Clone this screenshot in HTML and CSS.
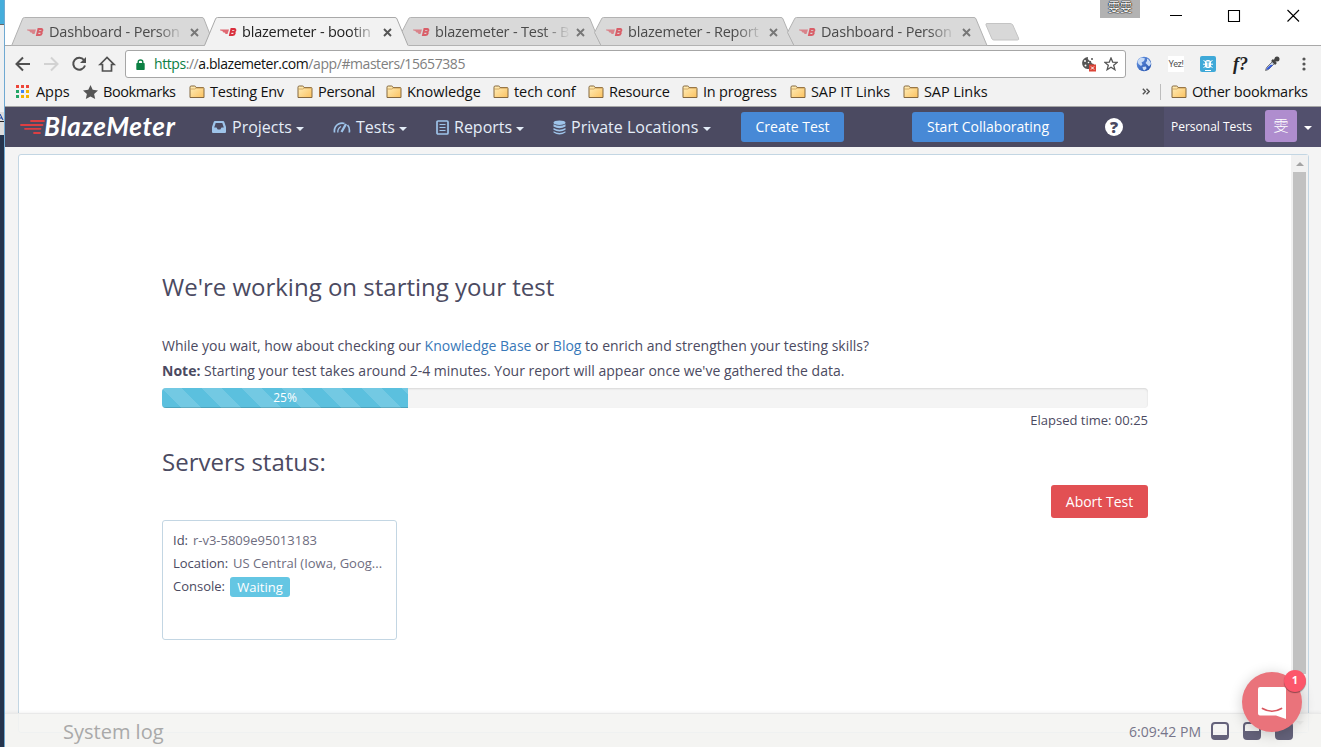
FILE: index.html
```html
<!DOCTYPE html>
<html lang="en">
<head>
<meta charset="utf-8">
<title>blazemeter - booting</title>
<link rel="stylesheet" href="styles.css">
</head>
<body>
<svg width="0" height="0" class="defs">
  <defs>
    <linearGradient id="fold" x1="0" y1="0" x2="1" y2="1"><stop offset="0" stop-color="#fff0bd"/><stop offset="1" stop-color="#fbc15f"/></linearGradient>
    <linearGradient id="glass" x1="0" y1="0" x2="1" y2="1"><stop offset="0" stop-color="#6b9ae8"/><stop offset="1" stop-color="#1e4ca8"/></linearGradient>
    <symbol id="folder" viewBox="0 0 16 14"><path d="M1 12.500V2.200Q1 1 2.200 1H5.600Q6.400 1 6.700 1.800L7 2.500H14Q15 2.500 15 3.500V12.500Z" fill="url(#fold)" stroke="#85683f"/><path d="M1.600 4H5.800L7.400 3.100H14.400" fill="none" stroke="#c79a55" stroke-width=".8"/></symbol>
    <symbol id="fav" viewBox="0 0 17 10"><path d="M0 2.500H9L7.500 7H5.500L5 5.800L3 5.200L2.500 4L.3 3.500Z" fill="#d92f3d" opacity=".7"/><path d="M10 8L11.400 2H14.200Q15.800 2.200 15.300 3.600Q14.900 4.800 13.600 4.800H11.500H13.400Q15.100 5 14.700 6.400Q14.200 8 12.500 8Z" fill="none" stroke="#d92f3d" stroke-width="1.900"/></symbol>
    <symbol id="close" viewBox="0 0 9 9"><path d="M1 1L8 8M8 1L1 8" fill="none" stroke="currentColor" stroke-width="1.900"/></symbol>
  </defs>
</svg>
<div class="screen">
  <aside class="behind"><div class="behind-sky"></div><div class="behind-pale"></div><div class="behind-grey"><svg viewBox="0 0 4 12"><path d="M0 2L3 8M0 6H2" stroke="#0c3b9c" fill="none"/><path d="M0 9.500H4" stroke="#222"/></svg></div><div class="behind-navy"></div></aside>
  <div class="window">
    <div class="tabs">
      <div class="tab"><svg class="tab-bg" viewBox="0 0 201 29"><path d="M.5 29L11.500 2Q12 .5 13.500 .5H191Q192.500 .5 193 2L200 20L196.500 28.500H.5Z"/></svg><svg class="fav"><use href="#fav"/></svg><span class="tab-title">Dashboard - Person</span><svg class="tab-x"><use href="#close"/></svg></div>
      <div class="tab active"><svg class="tab-bg" viewBox="0 0 206 29"><path class="fill" d="M0 30L11.500 2Q12 .5 13.500 .5H191Q192.500 .5 193 2L205 30Z"/><path class="line" d="M.5 28.500L11.500 2Q12 .5 13.500 .5H191Q192.500 .5 193 2L204 28.500"/></svg><svg class="fav"><use href="#fav"/></svg><span class="tab-title">blazemeter - bootin</span><svg class="tab-x"><use href="#close"/></svg></div>
      <div class="tab"><svg class="tab-bg" viewBox="0 0 206 29"><path d="M11 28.500L4.500 15.500L11.500 2Q12 .5 13.500 .5H191Q192.500 .5 193 2L204 28.500Z"/></svg><svg class="fav"><use href="#fav"/></svg><span class="tab-title">blazemeter - Test - B</span><svg class="tab-x"><use href="#close"/></svg></div>
      <div class="tab"><svg class="tab-bg" viewBox="0 0 206 29"><path d="M11 28.500L4.500 15.500L11.500 2Q12 .5 13.500 .5H191Q192.500 .5 193 2L204 28.500Z"/></svg><svg class="fav"><use href="#fav"/></svg><span class="tab-title">blazemeter - Report</span><svg class="tab-x"><use href="#close"/></svg></div>
      <div class="tab"><svg class="tab-bg" viewBox="0 0 206 29"><path d="M11 28.500L4.500 15.500L11.500 2Q12 .5 13.500 .5H191Q192.500 .5 193 2L204 28.500Z"/></svg><svg class="fav"><use href="#fav"/></svg><span class="tab-title">Dashboard - Person</span><svg class="tab-x"><use href="#close"/></svg></div>
      <svg class="newtab" viewBox="0 0 35 18"><path d="M2 .5H25Q27 .5 27.800 2L33.500 15Q34.300 17 32.500 17H9Q7.500 17 7 16L1 2Q.5 .5 2 .5Z" fill="#d8d8d8" stroke="#c4c4c4"/></svg>
      <div class="profile">雯雯</div>
      <svg class="win-btns" viewBox="0 0 131 14"><path d="M0 7.500H12M58.500 2.500H69.500V13.500H58.500ZM117.500 2L129 13.500M129 2L117.500 13.500" fill="none" stroke="#000" stroke-width="1.100"/></svg>
    </div>
    <div class="toolbar">
      <svg class="nav-icons" viewBox="0 0 104 18"><g fill="none" stroke="#505050" stroke-width="2"><path d="M15 9H2M8 2.500L1.500 9L8 15.500"/><path d="M29 9H42M36 2.500L42.500 9L36 15.500" stroke="#d2d2d2"/><path d="M69 5A6 6 0 1 0 70 10.500"/><path d="M85 9.500L92 2.500L99 9.500H96.500V16H87.500V9.500Z" stroke-width="1.700"/></g><path d="M71 2V8H65Z" fill="#505050"/></svg>
      <div class="omnibox">
        <svg class="lock" viewBox="0 0 9 11"><path d="M2.200 5V3Q2.200 1 4.500 1T6.800 3V5" fill="none" stroke="#0b8043" stroke-width="1.400"/><rect x=".3" y="4" width="8.400" height="7" rx=".7" fill="#0b8043"/></svg>
        <span class="url"><span class="scheme">https</span>://<span class="host">a.blazemeter.com</span>/app/#masters/15657385</span>
        <svg class="cookie" viewBox="0 0 16 16"><path d="M7 1A6 6 0 1 0 13 8A3 3 0 0 1 10 5A3 3 0 0 1 7 1Z" fill="#555"/><circle cx="4" cy="5" r="1" fill="#fff"/><circle cx="4.500" cy="9.500" r="1" fill="#fff"/><circle cx="7.500" cy="6.500" r=".8" fill="#fff"/><circle cx="11" cy="3" r="1" fill="#555"/><rect x="8" y="8.500" width="7" height="7" fill="#db4437"/><path d="M10 10.500L13 13.500M13 10.500L10 13.500" stroke="#fff"/></svg>
        <svg class="star" viewBox="0 0 14 14"><path d="M7 1L8.700 5.100L13.200 5.400L9.700 8.300L10.900 12.700L7 10.200L3.100 12.700L4.300 8.300L.8 5.400L5.300 5.100Z" fill="none" stroke="#555" stroke-width="1.300"/></svg>
      </div>
      <svg class="ext globe" viewBox="0 0 16 16"><circle cx="8" cy="8" r="7.300" fill="url(#glass)"/><path d="M1.500 6Q2 3 5.500 1.500L9 2.500L8 5L5.500 6.500L6.500 8.500L5 10L2.500 8ZM11 2.500Q14.500 4.500 15 8L13 10.500L11 8.500L9.500 7L11 5ZM6.500 11L10 10.500L10.500 12.500L8.500 14.500L7 13.500Z" fill="#c9dcf6"/></svg>
      <span class="yez">Yez!</span>
      <svg class="ext bug" viewBox="0 0 16 16"><rect width="16" height="16" rx="2" fill="#3fa9d8"/><g stroke="#fff" fill="none"><path d="M3.500 4.500L6 6M12.500 4.500L10 6M3 8.200H13M3.500 11.500L6 10M12.500 11.500L10 10M5 14.500H11"/></g><rect x="5" y="4" width="6" height="8" rx="2.500" fill="#fff"/><path d="M8 6V11M6.500 6H9.500" stroke="#3fa9d8"/></svg>
      <span class="ff">f?</span>
      <svg class="ext dropper" viewBox="0 0 16 16"><path d="M1.500 14.500L2.500 11.500L9 5L11 7L4.500 13.500Z" fill="#c3cfe4" stroke="#777"/><path d="M2 14L3.500 11.500L6.500 9H9L5 13Z" fill="#345be0"/><path d="M8 4L12 8M10 5.500L13 2.500" stroke="#444" stroke-width="2.500"/><circle cx="13" cy="3" r="2.500" fill="#444"/></svg>
      <svg class="dots" viewBox="0 0 4 14"><g fill="#555"><circle cx="2" cy="2" r="1.600"/><circle cx="2" cy="7" r="1.600"/><circle cx="2" cy="12" r="1.600"/></g></svg>
    </div>
    <div class="bookmarks">
      <svg class="apps" viewBox="0 0 13 13"><g><path fill="#ed4539" d="M0 0h3v3h-3zM5 0h3v3h-3zM10 0h3v3h-3z"/><path fill="#23a566" d="M0 5h3v3h-3zM0 10h3v3h-3z"/><path fill="#3f85f4" d="M5 5h3v3h-3z"/><path fill="#f5b400" d="M10 5h3v3h-3zM5 10h3v3h-3zM10 10h3v3h-3z"/></g></svg>
      <span class="bm w-apps">Apps</span>
      <svg class="bmstar" viewBox="0 0 15 14"><path d="M7.500 0L9.700 4.800L15 5.400L11.100 9L12.200 14L7.500 11.400L2.800 14L3.900 9L0 5.400L5.300 4.800Z" fill="#555"/></svg>
      <span class="bm w-book">Bookmarks</span>
      <svg class="fold"><use href="#folder"/></svg><span class="bm w-test">Testing Env</span>
      <svg class="fold"><use href="#folder"/></svg><span class="bm w-pers">Personal</span>
      <svg class="fold"><use href="#folder"/></svg><span class="bm w-know">Knowledge</span>
      <svg class="fold"><use href="#folder"/></svg><span class="bm w-tech">tech conf</span>
      <svg class="fold"><use href="#folder"/></svg><span class="bm w-res">Resource</span>
      <svg class="fold"><use href="#folder"/></svg><span class="bm w-prog">In progress</span>
      <svg class="fold"><use href="#folder"/></svg><span class="bm w-sapit">SAP IT Links</span>
      <svg class="fold"><use href="#folder"/></svg><span class="bm w-sap">SAP Links</span>
      <svg class="more" viewBox="0 0 8 7"><path d="M.8 .7L3.500 3.500L.8 6.300M4.500 .7L7.200 3.500L4.500 6.300" fill="none" stroke="#555" stroke-width="1.400"/></svg>
      <i class="sep"></i>
      <svg class="fold"><use href="#folder"/></svg><span class="bm w-other">Other bookmarks</span>
    </div>
    <header class="appbar">
      <div class="logo"><svg class="speed" viewBox="0 0 26 17"><path d="M12 2H25M2 6H23.500M6 9.800H21.500M15 14H21" fill="none" stroke="#dc3f43" stroke-width="1.800" stroke-linecap="round"/></svg><span class="wordmark">BlazeMeter</span></div>
      <nav class="menu">
        <a class="mi m-proj"><svg class="mic" viewBox="0 0 16 14"><path fill-rule="evenodd" d="M4 1H12Q13 1 13.300 2L15 7V12Q15 13 14 13H2Q1 13 1 12V7L2.700 2Q3 1 4 1ZM4.700 3L3.200 7.500H5.500L6.700 9.500H9.300L10.500 7.500H12.800L11.300 3Z" fill="#9ec4ea"/></svg><span>Projects</span><i class="caret"></i></a>
        <a class="mi m-test"><svg class="mic wide" viewBox="0 0 18 14"><g fill="none" stroke="#9ec4ea"><path d="M1.500 12.500Q.8 6.500 5.500 4Q8.500 2.500 11.500 3.500M14.500 5Q17 7.500 16.300 12.500" stroke-width="1.700"/><path d="M4.800 12.500Q4.500 8.500 8 6.500" stroke-width="1.300"/><path d="M8.500 12L13 4" stroke-width="2.300"/></g></svg><span>Tests</span><i class="caret"></i></a>
        <a class="mi m-rep"><svg class="mic rep" viewBox="0 0 13 15"><rect x="1" y="1" width="11" height="13" rx="1" fill="none" stroke="#9ec4ea" stroke-width="1.700"/><path d="M3.500 4.500H9.500M3.500 7.500H9.500M3.500 10.500H9.500" stroke="#9ec4ea" stroke-width="1.200"/></svg><span>Reports</span><i class="caret"></i></a>
        <a class="mi m-loc"><svg class="mic rep" viewBox="0 0 13 15"><g fill="#9ec4ea"><ellipse cx="6.500" cy="2.700" rx="6" ry="2.300"/><path d="M.5 4.200Q6.500 7.500 12.500 4.200V6.500Q6.500 10 .5 6.500ZM.5 8Q6.500 11.300 12.500 8V9.800Q6.500 13.200 .5 9.800ZM.5 11.300Q6.500 14.500 12.500 11.300V12.500Q6.500 16.500 .5 12.500Z"/></g></svg><span>Private Locations</span><i class="caret"></i></a>
      </nav>
      <button class="btn create">Create Test</button>
      <button class="btn collab">Start Collaborating</button>
      <span class="help">?</span>
      <div class="account"><span class="acct-name">Personal Tests</span><span class="avatar">雯</span><i class="caret big"></i></div>
    </header>
    <main class="page">
      <section class="panel">
        <div class="content">
          <h1>We're working on starting your test</h1>
          <p class="wait">While you wait, how about checking our <a>Knowledge Base</a> or <a>Blog</a> to enrich and strengthen your testing skills?</p>
          <p class="note"><b>Note:</b> Starting your test takes around 2-4 minutes. Your report will appear once we've gathered the data.</p>
          <div class="progress"><div class="bar" style="width:24.95%"><span>25%</span></div></div>
          <div class="elapsed">Elapsed time: 00:25</div>
          <h2>Servers status:</h2>
          <div class="abort-row"><button class="abort">Abort Test</button></div>
          <div class="server">
            <div>Id: <span class="val">r-v3-5809e95013183</span></div>
            <div>Location: <span class="val">US Central (Iowa, Goog...</span></div>
            <div class="row">Console: <span class="badge">Waiting</span></div>
          </div>
        </div>
        <div class="scroll"><i class="up"></i><i class="thumb"></i><i class="down"></i></div>
      </section>
    </main>
    <footer class="log"><span class="log-title">System log</span><span class="clock">6:09:42 PM</span>
      <svg class="sizes" viewBox="0 0 82 18"><g fill="none" stroke="#64627a" stroke-width="2"><rect x="1" y="1" width="16" height="16" rx="3"/><rect x="33" y="1" width="16" height="16" rx="3"/><rect x="65" y="1" width="16" height="16" rx="3"/></g><path d="M1 13H17V16H1ZM33 9H49V16H33ZM65 2H81V16H65Z" fill="#64627a"/></svg>
    </footer>
  </div>
  <div class="chat"><svg viewBox="0 0 28 32"><path d="M2 0H26Q28 0 28 2V32L18 28.500H2Q0 28.500 0 26.500V2Q0 0 2 0Z" fill="#fff"/><path d="M4.500 21.500Q14 27 23.500 21.500" fill="none" stroke="#d9565f" stroke-width="1.700" stroke-linecap="round"/></svg><b class="count">1</b></div>
</div>
</body>
</html>
```
FILE: styles.css
```css
* { box-sizing: border-box; }
body { margin: 0; font-family: "Open Sans", "Noto Sans CJK SC", sans-serif; color: #4b4a61; overflow: hidden; }
svg { display: block; flex: none; }
i { font-style: normal; flex: none; }
.defs { position: absolute; }
.screen { position: relative; display: flex; width: 1321px; height: 747px; overflow: hidden; background: #fff; }
.behind { width: 5px; border-right: 1px solid #6fa9d2; flex: none; overflow: hidden; display: flex; flex-direction: column; }
.behind-sky { height: 25px; background: #45addb; border-bottom: 1px solid #666; }
.behind-pale { height: 87px; background: #eef0f2; }
.behind-grey { height: 23px; background: #ddd; }
.behind-grey svg { width: 4px; height: 12px; }
.behind-navy { flex: 1; background: #25344d; }
.window { flex: 1; min-width: 0; display: flex; flex-direction: column; position: relative; }

.tabs { height: 46px; display: flex; align-items: flex-end; padding-left: 6px; border-bottom: 1px solid #a9a9a9; flex: none; position: relative; }
.tab { position: relative; width: 193px; height: 28px; display: flex; align-items: center; flex: none; padding-left: 16px; font-size: 14.500px; letter-spacing: -.2px; color: #4a4a4a; }
.tab-bg { position: absolute; left: 0; top: 0; height: 29px; width: 206px; fill: #d9d9d9; stroke: #b2b2b2; overflow: visible; }
.tab:first-child .tab-bg { width: 201px; }
.tab.active { z-index: 2; color: #222; }
.active .tab-bg .fill { fill: #f2f2f2; stroke: none; }
.active .tab-bg .line { fill: none; stroke: #a9a9a9; }
.fav { position: relative; width: 17px; height: 10px; opacity: .72; margin-top: 1px; }
.active .fav { opacity: 1; }
.tab-title { position: relative; top: 1px; margin-left: 5px; width: 138px; white-space: nowrap; line-height: 22px; -webkit-mask-image: linear-gradient(90deg, #000 78%, transparent 98%); }
.tab-x { position: relative; width: 9px; height: 9px; margin: 2px 0 0 3px; color: #777; }
.active .tab-x { color: #555; }
.newtab { width: 35px; height: 18px; margin: 0 0 4px 9px; }
.profile { width: 40px; height: 18px; background: #b2b2b2; color: #fff; text-shadow: 0 0 1px #000, 0 0 1px #000, 0 0 1px #000; font-size: 12px; line-height: 16px; text-align: center; align-self: flex-start; margin-left: 80px; }
.win-btns { width: 131px; height: 14px; margin: 8px 0 0 30px; align-self: flex-start; }

.toolbar { height: 35px; background: #f2f2f2; display: flex; align-items: center; padding: 1px 0 0 10px; flex: none; }
.nav-icons { width: 104px; height: 18px; }
.omnibox { width: 1001px; height: 28px; margin-left: 6px; border: 1px solid #a6a6a6; border-radius: 3px; background: #fff; display: flex; align-items: center; padding-left: 10px; flex: none; }
.lock { width: 9px; height: 11px; }
.url { margin: 0 0 1px 9px; font-size: 14px; letter-spacing: -.43px; color: #808080; width: 917px; white-space: nowrap; }
.scheme { color: #0b8043; }
.host { color: #111; }
.cookie { width: 16px; height: 16px; margin-left: 10px; }
.star { width: 14px; height: 14px; margin-left: 7px; }
.ext { width: 16px; height: 16px; }
.globe { margin-left: 10px; }
.yez { width: 16px; height: 16px; background: #fff; margin-left: 16px; font: 9px/17px Roboto, sans-serif; letter-spacing: -.4px; color: #555; text-align: center; }
.bug { margin-left: 16px; }
.ff { width: 20px; margin-left: 12px; font: italic bold 18px/20px "Liberation Serif", serif; color: #222; text-align: right; }
.dropper { margin-left: 16px; }
.dots { width: 4px; height: 14px; margin-left: 22px; }

.bookmarks { height: 26px; background: #f2f2f2; border-bottom: 1px solid #a6a6a6; display: flex; align-items: center; padding: 0 0 4px 11px; flex: none; }
.apps { width: 13px; height: 13px; }
.bm { font-size: 14.500px; letter-spacing: -.08px; color: #111; white-space: nowrap; line-height: 20px; flex: none; margin-left: 5px; }
.w-apps { margin-left: 7px; width: 47px; }
.bmstar { width: 15px; height: 14px; }
.w-book { width: 86px; letter-spacing: -.42px; }
.fold { width: 16px; height: 14px; }
.w-test { width: 87px; letter-spacing: -.25px; }
.w-pers { width: 68px; letter-spacing: -.25px; }
.w-know { width: 86px; }
.w-tech { width: 74px; }
.w-res { width: 73px; letter-spacing: -.25px; }
.w-prog { width: 87px; letter-spacing: -.2px; }
.w-sapit { width: 92px; }
.w-sap { width: 218px; }
.w-other { letter-spacing: -.22px; }
.more { width: 8px; height: 7px; }
.sep { width: 1px; height: 16px; background: #bdbdbd; margin: 0 10px; }

.appbar { height: 40px; background: #4b4a61; display: flex; align-items: center; flex: none; color: #e4edf8; }
.logo { display: flex; align-items: center; width: 206px; padding-left: 14px; }
.speed { width: 26px; height: 17px; }
.wordmark { color: #fff; font: italic bold 26px/28px Lato, sans-serif; letter-spacing: .65px; margin: 0 0 2px -1px; }
.menu { display: flex; width: 530px; flex: none; }
.mi { display: flex; align-items: center; font-size: 16px; line-height: 22px; white-space: nowrap; flex: none; }
.mic { width: 16px; height: 14px; margin-right: 5px; }
.mic.wide { width: 18px; }
.mic.rep { width: 13px; height: 15px; }
.m-proj { width: 122px; }
.m-test { width: 103px; }
.m-rep { width: 117px; }
.m-loc .caret { margin-left: 5px; }
.caret { width: 0; height: 0; border: 4px solid transparent; border-top-color: currentColor; border-bottom: 0; margin: 3px 0 0 4px; }
.btn { height: 30px; border: 0; border-radius: 3px; background: #4789d6; color: #fff; font: 14px "Open Sans", sans-serif; padding: 0 0 2px; white-space: nowrap; flex: none; }
.create { width: 103px; }
.collab { width: 152px; margin-left: 68px; }
.help { width: 18px; height: 18px; border-radius: 50%; background: #fff; color: #4b4a61; font: 800 16px/18px "Open Sans", sans-serif; text-align: center; margin-left: 41px; flex: none; }
.account { flex: 1; margin-left: 41px; height: 40px; background: #52506d; display: flex; align-items: center; color: #fff; }
.acct-name { width: 94px; margin: 0 0 1px 7px; font-size: 12px; white-space: nowrap; flex: none; }
.avatar { width: 32px; height: 32px; border-radius: 3px; background: #af8dce; font-size: 15px; line-height: 30px; font-weight: 300; text-align: center; flex: none; margin-bottom: 2px; }
.big { margin: 2px 0 0 7px; }

.page { flex: 1; background: #f4f4f4; padding: 7px 12px 14px 13px; display: flex; }
.panel { flex: 1; background: #fff; border: 1px solid #c3d6e3; border-radius: 3px; display: flex; justify-content: space-between; height: 579px; }
.content { width: 986px; margin-left: 143px; padding-top: 115px; }
h1, h2 { font-size: 24px; font-weight: 400; line-height: 34px; margin: 0; }
p { margin: 0; font-size: 14px; line-height: 25px; white-space: nowrap; }
.wait { margin-top: 29px; }
a { color: inherit; }
.wait a { color: #3878b8; }
.progress { margin-top: 5px; height: 20px; background: #f4f4f4; border-radius: 4px; box-shadow: inset 0 1px 2px rgba(0,0,0,.12); overflow: hidden; }
.bar { height: 20px; background: #5bc0de linear-gradient(45deg, rgba(255,255,255,.15) 25%, transparent 25%, transparent 50%, rgba(255,255,255,.15) 50%, rgba(255,255,255,.15) 75%, transparent 75%, transparent) 0 0 / 40px 40px; box-shadow: inset 0 -1px 0 rgba(0,0,0,.15); color: #fff; font-size: 12px; line-height: 20px; text-align: center; }
.elapsed { text-align: right; font-size: 13px; line-height: 20px; margin-top: 2px; }
h2 { margin-top: 15px; }
.abort-row { display: flex; justify-content: flex-end; margin-top: 6px; }
.abort { width: 97px; height: 33px; border: 0; border-radius: 3px; background: #e25053; color: #fff; font: 14px "Open Sans", sans-serif; padding: 0; }
.server { width: 235px; height: 120px; margin-top: 2px; border: 1px solid #c3d6e3; border-radius: 3px; padding: 8px 10px; font-size: 13px; line-height: 23px; white-space: nowrap; }
.val { color: #6e6d80; margin-left: 1.500px; }
.row { display: flex; }
.badge { width: 60px; height: 20px; line-height: 20px; text-align: center; background: #64c6e3; color: #fff; border-radius: 3px; margin: 2px 0 0 5px; }
.scroll { width: 17px; background: #f1f1f1; display: flex; flex-direction: column; align-items: center; }
.up { border: 4px solid transparent; border-bottom-color: #a3a3a3; border-top: 0; margin: 7px 0 6px; }
.thumb { width: 13px; height: 502px; background: #c1c1c1; }
.down { border: 4px solid transparent; border-top-color: #a3a3a3; border-bottom: 0; margin-top: 47px; }

.log { position: absolute; left: 0; right: 0; bottom: 0; height: 34px; background: rgba(244,244,242,.9); border-top: 1px solid #e9e9e9; box-shadow: 0 -1px 3px rgba(0,0,0,.05); display: flex; align-items: center; padding: 2px 28px 0 58px; }
.log-title { font-size: 20px; color: #a9a9a9; line-height: 28px; margin-right: auto; }
.clock { font-size: 14px; color: #77758a; margin-right: 10px; }
.sizes { width: 82px; height: 18px; margin-bottom: 1px; }
.chat { position: absolute; left: 1242px; top: 672px; width: 60px; height: 60px; border-radius: 50%; background: #ea737b; box-shadow: 0 2px 14px rgba(0,0,0,.2); padding: 15px 16px; }
.chat svg { width: 28px; height: 32px; }
.count { position: absolute; left: 42px; top: -2px; width: 22px; height: 22px; border-radius: 50%; background: #fc576b; color: #fff; font-size: 11px; line-height: 20px; text-align: center; box-shadow: 0 1px 1px rgba(0,0,0,.4); }
```
